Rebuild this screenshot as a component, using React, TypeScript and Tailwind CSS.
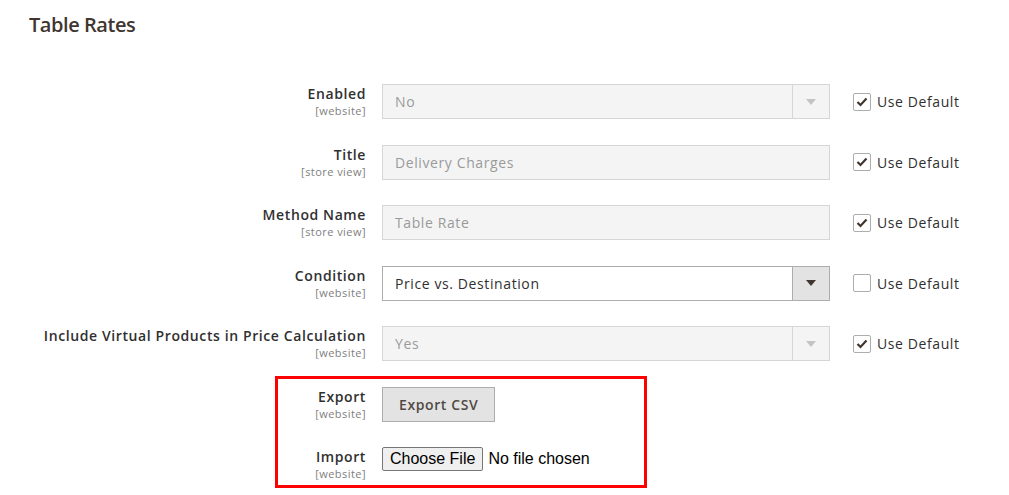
import React from 'react';

type Field =
  | { kind: 'select'; value: string; disabled?: boolean }
  | { kind: 'text'; value: string; disabled?: boolean };

interface Row {
  label: string;
  scope: string;
  field: Field;
  useDefault: boolean;
}

const rows: Row[] = [
  { label: 'Enabled', scope: '[website]', field: { kind: 'select', value: 'No', disabled: true }, useDefault: true },
  { label: 'Title', scope: '[store view]', field: { kind: 'text', value: 'Delivery Charges', disabled: true }, useDefault: true },
  { label: 'Method Name', scope: '[store view]', field: { kind: 'text', value: 'Table Rate', disabled: true }, useDefault: true },
  { label: 'Condition', scope: '[website]', field: { kind: 'select', value: 'Price vs. Destination' }, useDefault: false },
  {
    label: 'Include Virtual Products in Price Calculation',
    scope: '[website]',
    field: { kind: 'select', value: 'Yes', disabled: true },
    useDefault: true,
  },
];

function Label({ label, scope }: { label: string; scope: string }) {
  return (
    <div className="w-[366px] shrink-0 text-right">
      <div className="text-[14px] leading-[20px] font-semibold tracking-[0.6px] text-[#303030]">{label}</div>
      <div className="text-[11px] leading-[13px] tracking-[0.45px] text-[#808080]">{scope}</div>
    </div>
  );
}

function Arrow({ disabled }: { disabled?: boolean }) {
  return (
    <svg width="10" height="6" viewBox="0 0 10 6">
      <polygon points="0,0 10,0 5,6" fill={disabled ? '#c4c4c4' : '#41362f'} />
    </svg>
  );
}

function Control({ field }: { field: Field }) {
  const disabled = field.disabled;
  const box = disabled
    ? 'bg-[#f4f4f4] border-[#d6d6d6] text-[#9a9a9a]'
    : 'bg-white border-[#adadad] text-[#303030]';
  return (
    <div className={`ml-[16px] w-[448px] h-[35px] border flex items-stretch text-[14px] tracking-[0.6px] ${box}`}>
      <div className="flex-1 flex items-center pl-[12px]">{field.value}</div>
      {field.kind === 'select' && (
        <div
          className={`w-[37px] flex items-center justify-center border-l ${
            disabled ? 'border-[#d6d6d6]' : 'border-[#adadad] bg-[#e3e3e3]'
          }`}
        >
          <Arrow disabled={disabled} />
        </div>
      )}
    </div>
  );
}

function UseDefault({ checked }: { checked: boolean }) {
  return (
    <div className="ml-[23px] h-[35px] flex items-center gap-[6px]">
      <span className="w-[18px] h-[18px] border border-[#adadad] rounded-[2px] bg-white flex items-center justify-center">
        {checked && (
          <svg width="12" height="10" viewBox="0 0 12 10">
            <polyline points="1.5,5 4.5,8 10.5,1.5" fill="none" stroke="#41362f" strokeWidth="2.2" />
          </svg>
        )}
      </span>
      <span className="text-[14px] tracking-[0.6px] text-[#303030]">Use Default</span>
    </div>
  );
}

export default function App() {
  return (
    <div className="w-[1009px] h-[495px] bg-white overflow-hidden font-['Open_Sans',sans-serif]">
      <h2 className="pl-[29px] pt-[11px] text-[20px] leading-[28px] font-semibold tracking-[-0.45px] text-[#41362f]">
        Table Rates
      </h2>

      <div className="mt-[45px] flex flex-col gap-[25.5px]">
        {rows.map((row) => (
          <div key={row.label} className="flex items-start">
            <Label label={row.label} scope={row.scope} />
            <Control field={row.field} />
            <UseDefault checked={row.useDefault} />
          </div>
        ))}

        {/* Export / Import, highlighted */}
        <div className="relative flex flex-col gap-[25px]">
          <div className="flex items-start">
            <Label label="Export" scope="[website]" />
            <button className="ml-[16px] h-[35px] px-[16px] bg-[#e3e3e3] border border-[#adadad] text-[14px] font-semibold tracking-[0.6px] text-[#514943]">
              Export CSV
            </button>
          </div>
          <div className="flex items-start">
            <Label label="Import" scope="[website]" />
            <div className="ml-[16px] flex items-center gap-[5px] font-['Liberation_Sans',sans-serif] text-[16px] text-black">
              <span className="h-[24px] px-[7px] flex items-center bg-[#efefef] border border-[#767676] rounded-[2px]">
                Choose File
              </span>
              <span>No file chosen</span>
            </div>
          </div>
          <div className="absolute left-[275px] top-[-10.5px] w-[372px] h-[112px] border-[3px] border-[#ff0000] pointer-events-none" />
        </div>
      </div>
    </div>
  );
}
